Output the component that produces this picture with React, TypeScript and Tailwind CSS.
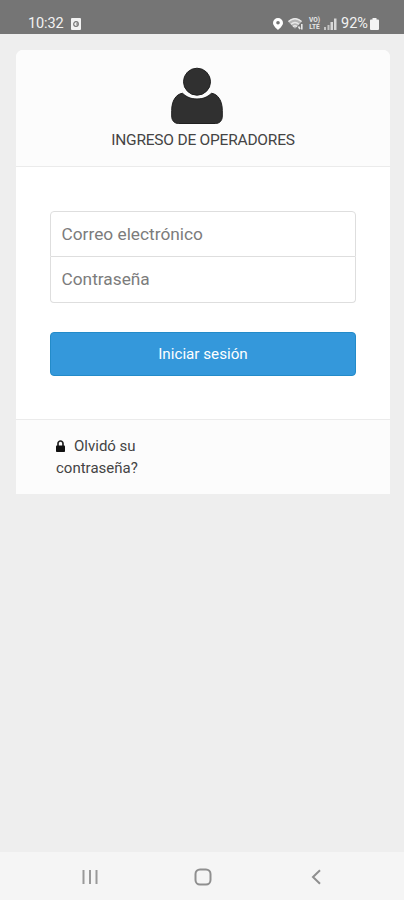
import React from "react";

function StatusBar() {
  return (
    <header className="flex h-[34px] shrink-0 items-start justify-between bg-[#757575] pl-[28px] pr-[25px] pt-[14px] text-[#f2f2f2]">
      <div className="flex h-[19px] items-center">
        <span className="w-[36px] whitespace-nowrap text-[14.5px] leading-[19px] tracking-[-0.1px]">10:32</span>
        <svg className="ml-[7px]" width="10" height="12" viewBox="0 0 10 12">
          <rect width="10" height="12" rx="1" fill="#f2f2f2" />
          <circle cx="5" cy="6" r="2.3" fill="none" stroke="#757575" strokeWidth="1.2" />
          <path d="M5 6h2" stroke="#757575" />
        </svg>
      </div>
      <div className="flex h-[19px] items-center">
        <svg width="10" height="12" viewBox="0 0 10 12">
          <path fillRule="evenodd" fill="#fff" d="M5 0a5 5 0 0 0-5 5c0 3 5 7 5 7s5-4 5-7a5 5 0 0 0-5-5Zm0 3a1.8 1.8 0 1 1 0 3.6A1.8 1.8 0 0 1 5 3Z" />
        </svg>
        <svg className="ml-[5px]" width="16" height="12" viewBox="0 0 16 12">
          <path d="M0 3.400C4-.7 10-.7 14 3.400L11 6.500 7 10.800Z" fill="#b5b5b5" />
          <path d="M.5 3.500c4-3.500 9-3.500 13 0M3 6.200c2.500-2.200 5.500-2.200 8 0M5 8.600c1.300-1.100 2.700-1.100 4 0" fill="none" stroke="#e8e8e8" strokeWidth="1.4" />
          <path d="M10.500 8.500l1.500 2.500M13.800 6v5.500" fill="none" stroke="#e8e8e8" strokeWidth="1.6" />
        </svg>
        <div className="ml-[4px] flex h-[14px] w-[13px] flex-col items-center text-[6.5px] font-bold leading-[7px] text-[#e8e8e8]">
          <span className="block h-[7px]">VO)</span>
          <span className="block h-[7px]">LTE</span>
        </div>
        <svg className="ml-[3px]" width="13" height="12" viewBox="0 0 13 12">
          <path d="M0 9h2v3H0zM3.500 7h2v5h-2z" fill="#c4c4c4" />
          <path d="M6.500 4h2.500v8H6.500zM10 .5h2.500V12H10z" fill="#d8d8d8" />
        </svg>
        <span className="ml-[4px] w-[28px] whitespace-nowrap text-[14.5px] leading-[19px]">92%</span>
        <svg className="ml-px" width="9" height="12" viewBox="0 0 9 12" fill="#f4f4f4">
          <path d="M2.500 0h4v1.500H8a1 1 0 0 1 1 1V11a1 1 0 0 1-1 1H1a1 1 0 0 1-1-1V2.500a1 1 0 0 1 1-1h1.500z" />
        </svg>
      </div>
    </header>
  );
}

function LoginCard() {
  return (
    <section className="ml-4 mt-4 flex h-[444px] w-[374px] flex-col overflow-hidden rounded-t-[7px] bg-white">
      <div className="flex h-[117px] shrink-0 flex-col items-center border-b border-[#ebebeb] bg-[#fcfcfc] pt-[17px]">
        <svg className="mr-[12px]" width="52" height="58" viewBox="0 0 52 58" fill="#303030" stroke="#202020" strokeWidth="1">
          <circle cx="26" cy="14.700" r="13.500" />
          <path d="M11.500 26.300C16 30.300 20 32 26 32S36 30.300 40.500 26.300C47 27 51.300 34 51.300 43.500V49c0 5-3 7.500-7 7.500H7.700c-4 0-7-2.500-7-7.500v-5.500C.7 34 5 27 11.500 26.300Z" />
        </svg>
        <h1 className="mt-[4px] whitespace-nowrap text-[15.5px] leading-[22px] tracking-[-0.22px] text-[#444]">INGRESO DE OPERADORES</h1>
      </div>
      <form className="flex h-[252px] shrink-0 flex-col px-[34px] pt-[44px]" onSubmit={(e) => e.preventDefault()}>
        <input type="email" placeholder="Correo electrónico" className="h-[46px] w-[306px] rounded-t-[4px] border border-[#dedede] px-[10.5px] pb-px text-[17.3px] outline-none placeholder:text-[#7c7c7c]" />
        <input type="password" placeholder="Contraseña" className="h-[46px] w-[306px] rounded-b-[4px] border border-t-0 border-[#dedede] px-[10.5px] pb-px text-[17.3px] outline-none placeholder:text-[#7c7c7c]" />
        <button type="submit" className="mt-[29px] h-[44px] w-[306px] rounded-[4px] border border-[#238bc9] bg-[#3498db] text-[15.2px] text-white">Iniciar sesión</button>
      </form>
      <footer className="flex-1 border-t border-[#ebebeb] bg-[#fcfcfc] pl-[40px] pt-[15px]">
        <a className="block w-[110px] text-[15px] leading-[22px] text-[#444]">
          <svg className="mr-[9px] inline-block align-[-1px]" width="9" height="12" viewBox="0 0 9 12">
            <path d="M2 6V3.500a2.500 2.500 0 0 1 5 0V6" fill="none" stroke="#222" strokeWidth="1.700" />
            <rect y="5.500" width="9" height="6.500" rx="0.800" fill="#111" />
          </svg>
          Olvidó su contraseña?
        </a>
      </footer>
    </section>
  );
}

function NavigationBar() {
  return (
    <nav className="mt-auto flex h-[48px] shrink-0 items-center justify-between bg-[#f5f5f5] pl-[82px] pr-[83px] pt-[2px]">
      <svg width="16" height="16" viewBox="0 0 16 16" stroke="#999" strokeWidth="2">
        <path d="M1.500 1v14M8 1v14M14.500 1v14" />
      </svg>
      <svg className="mr-[3px]" width="18" height="18" viewBox="0 0 18 18" fill="none" stroke="#8f8f8f" strokeWidth="2">
        <rect x="1.500" y="1.500" width="15" height="15" rx="4.500" />
      </svg>
      <svg width="10" height="16" viewBox="0 0 10 16" fill="none" stroke="#8f8f8f" strokeWidth="2">
        <path d="M9 1.200 2 8l7 6.800" />
      </svg>
    </nav>
  );
}

export default function App() {
  return (
    <main className="flex h-[900px] w-[404px] flex-col overflow-hidden bg-[#eeeeee] font-[Roboto,sans-serif]">
      <StatusBar />
      <LoginCard />
      <NavigationBar />
    </main>
  );
}
